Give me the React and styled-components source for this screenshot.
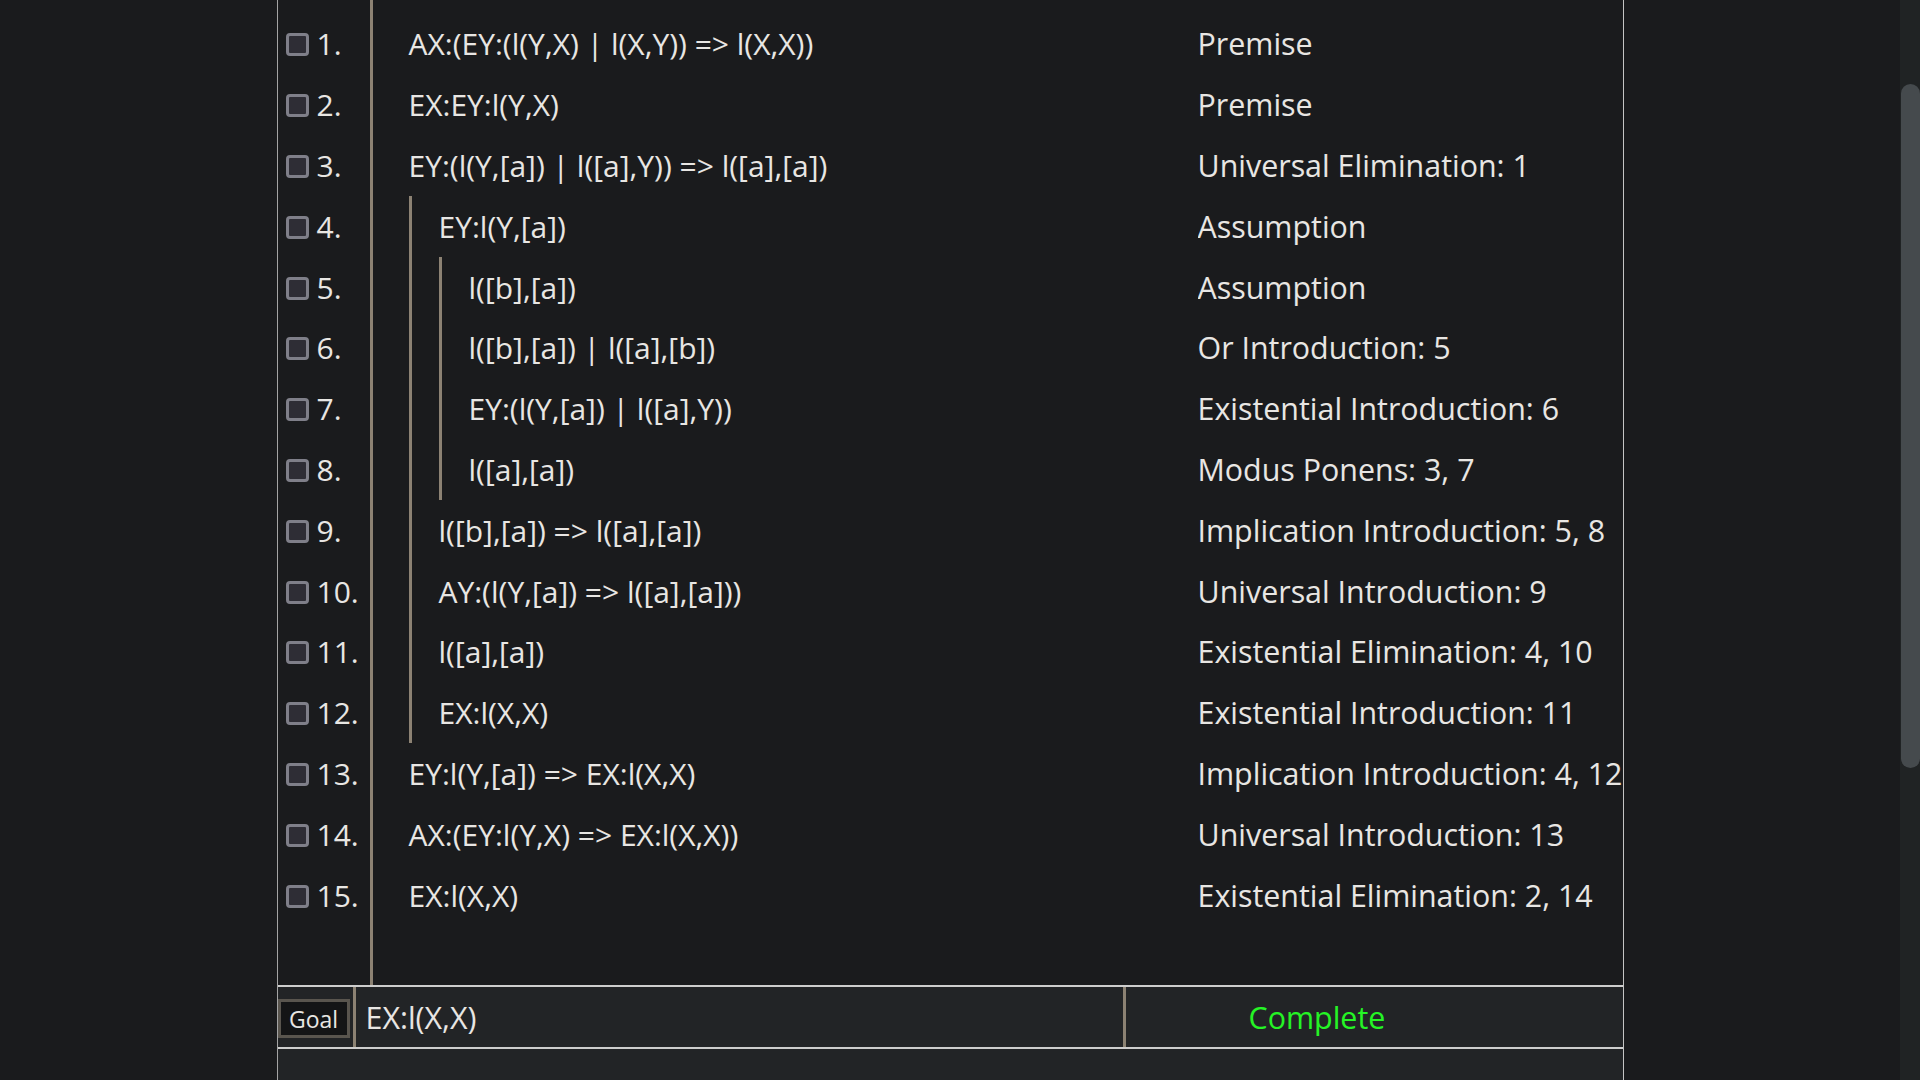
import React from 'react';
import styled, { createGlobalStyle } from 'styled-components';

const GlobalStyle = createGlobalStyle`
  html, body {
    margin: 0;
    padding: 0;
    background: #1a1b1d;
    overflow: hidden;
  }
  * {
    box-sizing: border-box;
  }
`;

const Page = styled.div`
  display: flex;
  height: 100vh;
  font-family: "Open Sans", "Noto Sans", sans-serif;
  color: #e8e6e3;
`;

const Main = styled.div`
  flex: 1;
  display: flex;
  justify-content: center;
`;

const Panel = styled.div`
  width: 1347px;
  height: 100%;
  display: flex;
  flex-direction: column;
  border-left: 1px solid #a4a4a4;
  border-right: 1px solid #c4c4c4;
  overflow: hidden;
`;

const ProofArea = styled.div`
  flex: 0 0 985px;
  display: flex;
  background: #1a1b1d;
`;

const LineColumn = styled.div`
  width: 95px;
  flex-shrink: 0;
  padding: 13.6px 0 0 8px;
  border-right: 3px solid #8c8273;
`;

const LineCell = styled.div`
  height: 60.8px;
  display: flex;
  align-items: center;
  gap: 8px;
  font-size: 30px;
`;

const Check = styled.input.attrs({ type: 'checkbox' })`
  appearance: none;
  margin: 2px 0 0;
  width: 23px;
  height: 23px;
  border: 3px solid #7f7f89;
  border-radius: 4px;
  background: #2e2d35;
  flex-shrink: 0;
`;

const ProofColumn = styled.div`
  flex: 1;
  padding: 13.6px 0 0 36px;
  min-width: 0;
`;

const Row = styled.div`
  height: 60.8px;
  display: grid;
  grid-template-columns: 789px 1fr;
  white-space: nowrap;
`;

const FormulaCell = styled.div`
  display: flex;
  align-items: stretch;
  font-size: 30px;
`;

const DepthBar = styled.div`
  width: 30px;
  flex-shrink: 0;
  border-left: 3px solid #8c8273;
`;

const Formula = styled.span`
  display: flex;
  align-items: center;
`;

const Reason = styled.div`
  display: flex;
  align-items: center;
  overflow: hidden;
  font-size: 30.4px;
`;

const GoalBar = styled.div`
  display: flex;
  height: 64px;
  background: #222426;
  border-top: 2px solid #cdcdcd;
  border-bottom: 2px solid #cdcdcd;
`;

const GoalLabelCell = styled.div`
  width: 78px;
  display: flex;
  align-items: center;
  padding-top: 3px;
  border-right: 3px solid #8c8273;
`;

const GoalTag = styled.span`
  width: 72px;
  height: 39px;
  display: flex;
  align-items: center;
  justify-content: center;
  background: #141516;
  border: 3px solid #59554e;
  font-size: 23px;
`;

const GoalFormula = styled.div`
  width: 770px;
  display: flex;
  align-items: center;
  padding-left: 10px;
  font-size: 30.4px;
  border-right: 3px solid #8c8273;
`;

const Status = styled.div`
  flex: 1;
  display: flex;
  align-items: center;
  padding-left: 123px;
  font-size: 30.4px;
  color: ${(p) => (p.$done ? '#25f425' : '#e8e6e3')};
`;

const Filler = styled.div`
  flex: 1;
  background: #222426;
`;

const ScrollTrack = styled.div`
  width: 20px;
  flex-shrink: 0;
  background: #202324;
  padding-top: 84px;
`;

const ScrollThumb = styled.div`
  width: 19px;
  height: 684px;
  margin-left: 1px;
  border-radius: 10px;
  background: #454a4d;
`;

const lines = [
  { depth: 0, text: 'AX:(EY:(l(Y,X) | l(X,Y)) => l(X,X))', reason: 'Premise' },
  { depth: 0, text: 'EX:EY:l(Y,X)', reason: 'Premise' },
  { depth: 0, text: 'EY:(l(Y,[a]) | l([a],Y)) => l([a],[a])', reason: 'Universal Elimination: 1' },
  { depth: 1, text: 'EY:l(Y,[a])', reason: 'Assumption' },
  { depth: 2, text: 'l([b],[a])', reason: 'Assumption' },
  { depth: 2, text: 'l([b],[a]) | l([a],[b])', reason: 'Or Introduction: 5' },
  { depth: 2, text: 'EY:(l(Y,[a]) | l([a],Y))', reason: 'Existential Introduction: 6' },
  { depth: 2, text: 'l([a],[a])', reason: 'Modus Ponens: 3, 7' },
  { depth: 1, text: 'l([b],[a]) => l([a],[a])', reason: 'Implication Introduction: 5, 8' },
  { depth: 1, text: 'AY:(l(Y,[a]) => l([a],[a]))', reason: 'Universal Introduction: 9' },
  { depth: 1, text: 'l([a],[a])', reason: 'Existential Elimination: 4, 10' },
  { depth: 1, text: 'EX:l(X,X)', reason: 'Existential Introduction: 11' },
  { depth: 0, text: 'EY:l(Y,[a]) => EX:l(X,X)', reason: 'Implication Introduction: 4, 12' },
  { depth: 0, text: 'AX:(EY:l(Y,X) => EX:l(X,X))', reason: 'Universal Introduction: 13' },
  { depth: 0, text: 'EX:l(X,X)', reason: 'Existential Elimination: 2, 14' },
];

export default function App() {
  return (
    <Page>
      <GlobalStyle />
      <Main>
        <Panel>
          <ProofArea>
            <LineColumn>
              {lines.map((line, i) => (
                <LineCell key={i}>
                  <Check />
                  <span>{i + 1}.</span>
                </LineCell>
              ))}
            </LineColumn>
            <ProofColumn>
              {lines.map((line, i) => (
                <Row key={i}>
                  <FormulaCell>
                    {Array.from({ length: line.depth }).map((_, d) => (
                      <DepthBar key={d} />
                    ))}
                    <Formula>{line.text}</Formula>
                  </FormulaCell>
                  <Reason>{line.reason}</Reason>
                </Row>
              ))}
            </ProofColumn>
          </ProofArea>
          <GoalBar>
            <GoalLabelCell>
              <GoalTag>Goal</GoalTag>
            </GoalLabelCell>
            <GoalFormula>EX:l(X,X)</GoalFormula>
            <Status $done>Complete</Status>
          </GoalBar>
          <Filler />
        </Panel>
      </Main>
      <ScrollTrack>
        <ScrollThumb />
      </ScrollTrack>
    </Page>
  );
}
